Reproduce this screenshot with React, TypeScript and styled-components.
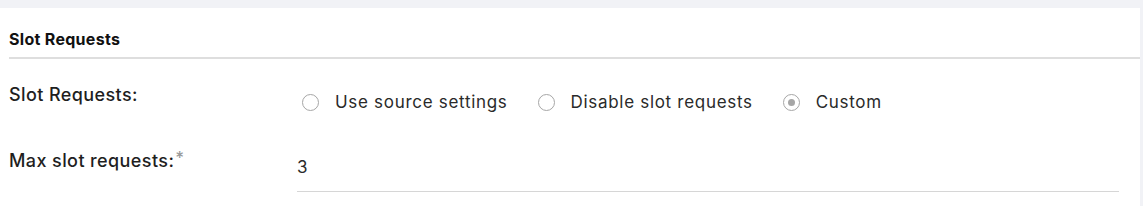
import React, { useState } from 'react';
import styled, { createGlobalStyle } from 'styled-components';

const GlobalStyle = createGlobalStyle`
  html, body {
    margin: 0;
    padding: 0;
    background: #f1f2f6;
  }
  body {
    font-family: Inter, "Noto Sans", "Liberation Sans", sans-serif;
    color: #1f1f1f;
  }
`;

const options = [
  { id: 'source', label: 'Use source settings' },
  { id: 'disable', label: 'Disable slot requests' },
  { id: 'custom', label: 'Custom' },
];

const App = () => {
  const [mode, setMode] = useState('custom');
  const [maxRequests, setMaxRequests] = useState('3');

  return (
    <>
      <GlobalStyle />
      <Page>
        <Panel>
          <SectionHeader>
            <SectionTitle>Slot Requests</SectionTitle>
          </SectionHeader>
          <FieldRow $gap={24}>
            <FieldLabel>Slot Requests:</FieldLabel>
            <RadioGroup>
              {options.map((option) => (
                <RadioOption key={option.id}>
                  <RadioInput
                    type="radio"
                    name="slotRequests"
                    checked={mode === option.id}
                    onChange={() => setMode(option.id)}
                  />
                  <RadioText>{option.label}</RadioText>
                </RadioOption>
              ))}
            </RadioGroup>
          </FieldRow>
          <FieldRow $gap={35}>
            <FieldLabel>
              Max slot requests:<Required>*</Required>
            </FieldLabel>
            <ValueInput
              type="text"
              value={maxRequests}
              onChange={(e: React.ChangeEvent<HTMLInputElement>) =>
                setMaxRequests(e.target.value)
              }
            />
          </FieldRow>
        </Panel>
      </Page>
    </>
  );
};

export default App;

const Page = styled.div`
  padding: 8px 3px 0 0;
  min-height: 206px;
  box-sizing: border-box;
`;

const Panel = styled.div`
  background: #fff;
  height: 198px;
`;

const SectionHeader = styled.div`
  margin-left: 9px;
  padding: 21px 0 8px;
  border-bottom: 2px solid #dedede;
`;

const SectionTitle = styled.h2`
  margin: 0;
  font-size: 16px;
  line-height: 20px;
  font-weight: 700;
  letter-spacing: 0.3px;
  color: #111;
`;

const FieldRow = styled.div<{ $gap: number }>`
  display: grid;
  grid-template-columns: 288px 822px;
  align-items: start;
  padding-left: 9px;
  margin-top: ${(p) => p.$gap}px;
`;

const FieldLabel = styled.label`
  font-size: 18px;
  font-weight: 500;
  line-height: 24px;
  letter-spacing: 0.4px;
  color: #1f1f1f;
`;

const Required = styled.span`
  color: #9a9a9a;
  font-size: 17px;
  vertical-align: top;
  line-height: 18px;
  margin-left: 1px;
`;

const RadioGroup = styled.div`
  display: flex;
  align-items: center;
  gap: 30px;
  padding: 7px 0 0 5px;
`;

const RadioOption = styled.label`
  display: flex;
  align-items: center;
  gap: 16px;
  cursor: pointer;
`;

const RadioInput = styled.input`
  appearance: none;
  margin: 0;
  width: 17px;
  height: 17px;
  border: 1.5px solid #a6a6a6;
  border-radius: 50%;
  box-sizing: border-box;
  display: grid;
  place-items: center;

  &::before {
    content: '';
    width: 7px;
    height: 7px;
    border-radius: 50%;
    background: #a6a6a6;
    transform: scale(0);
  }

  &:checked::before {
    transform: scale(1);
  }
`;

const RadioText = styled.span`
  font-size: 17px;
  line-height: 24px;
  letter-spacing: 0.7px;
  color: #2a2a2a;
`;

const ValueInput = styled.input`
  border: 0;
  border-bottom: 1.5px solid #d6d6d6;
  outline: none;
  padding: 6px 0 12px;
  height: 24px;
  line-height: 24px;
  font-family: inherit;
  font-size: 17px;
  letter-spacing: 0.7px;
  color: #2a2a2a;
  width: 822px;
  box-sizing: content-box;
  background: transparent;
`;
